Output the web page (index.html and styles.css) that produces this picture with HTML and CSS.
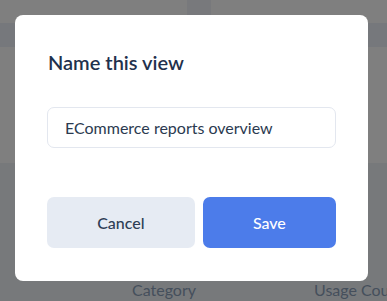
FILE: index.html
```html
<!DOCTYPE html>
<html>
<head>
<meta charset="utf-8">
<link rel="stylesheet" href="styles.css">
</head>
<body>
<div class="page">
  <div class="band band-top"><div class="sep"></div></div>
  <div class="band band-head"></div>
  <div class="band band-mid"></div>
  <div class="band band-table">
    <span class="col col-cat">Category</span>
    <span class="col col-usage">Usage Count</span>
  </div>
</div>
<div class="modal">
  <h2 class="title">Name this view</h2>
  <div class="input">ECommerce reports overview</div>
  <div class="actions">
    <button class="btn btn-cancel">Cancel</button>
    <button class="btn btn-save">Save</button>
  </div>
</div>
</body>
</html>
```
FILE: styles.css
```css
* { box-sizing: border-box; }
html, body { margin: 0; padding: 0; }
body {
  width: 387px;
  height: 301px;
  overflow: hidden;
  position: relative;
  font-family: Lato, "Noto Sans", sans-serif;
  background: #7f7f7f;
}
.page { display: flex; flex-direction: column; height: 301px; }
.band { width: 100%; }
.band-top { height: 23px; background: #7f7f7f; display: flex; }
.sep { margin-left: 187px; width: 24px; height: 15px; background: #78797c; }
.band-head { height: 24px; background: #76787c; }
.band-mid { height: 116px; background: #7f7f7f; }
.band-table {
  flex: 1;
  background: #77797b;
  display: flex;
  align-items: flex-end;
  padding-bottom: 1px;
  overflow: hidden;
}
.col { font-size: 16px; color: #454f5c; line-height: 20px; white-space: nowrap; }
.col-cat { margin-left: 132px; }
.col-usage { margin-left: 118px; }

.modal {
  position: absolute;
  left: 15px;
  top: 15px;
  width: 353px;
  height: 266px;
  background: #fff;
  border-radius: 8px;
  padding: 33px 32px 33px 32px;
  display: flex;
  flex-direction: column;
}
.title {
  margin: 0;
  font-size: 20px;
  line-height: 28px;
  font-weight: 600;
  color: #1f314d;
  padding-left: 1px;
}
.input {
  margin-top: 31px;
  height: 41px;
  border: 1px solid #e3e7ef;
  border-radius: 7px;
  padding: 0 17px;
  display: flex;
  align-items: center;
  font-size: 16px;
  color: #2b3a50;
}
.actions {
  margin-top: 49px;
  display: flex;
  gap: 8px;
}
.btn {
  flex: 1 1 auto;
  height: 51px;
  border: none;
  border-radius: 7px;
  font-family: Lato, "Noto Sans", sans-serif;
  font-size: 16px;
  font-weight: 500;
  padding: 0 16px;
}
.btn-cancel { background: #e6ebf3; color: #2e3e55; }
.btn-save { background: #4c7cea; color: #fff; }
```
